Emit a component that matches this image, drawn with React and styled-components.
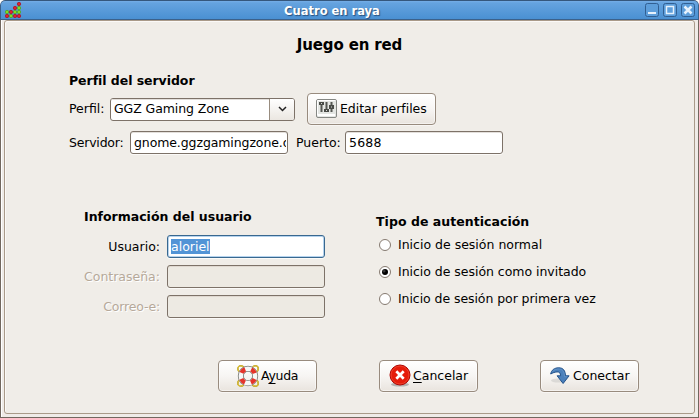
import React from "react";
import styled, { createGlobalStyle, css } from "styled-components";

const Global = createGlobalStyle`
  * { box-sizing: border-box; }
  body { margin: 0; background: #fff; overflow: hidden; }
`;

const Window = styled.div`
  width: 699px;
  height: 418px;
  display: flex;
  flex-direction: column;
  overflow: hidden;
  border-radius: 5px 5px 0 0;
  background: #efebe7;
  color: #000;
  font: 12.5px/16px "DejaVu Sans", sans-serif;
  white-space: nowrap;
`;

const TitleBar = styled.header`
  height: 20px;
  flex: none;
  display: grid;
  grid-template-columns: 64px 1fr 64px;
  align-items: center;
  padding: 0 3px 0 4px;
  border: 1px solid #3b618b;
  border-top-color: #35577c;
  border-radius: 5px 5px 0 0;
  background: linear-gradient(#75aee7 0, #65a3df 2px, #4a90d2 100%);
`;

const WindowTitle = styled.h1`
  margin: 0;
  padding: 1px 36px 0 0;
  text-align: center;
  font-size: 11.5px;
  line-height: 16px;
  color: #fff;
  text-shadow: 1px 1px 1px #28507c;
`;

const WindowButtons = styled.div`
  display: flex;
  justify-content: flex-end;
  gap: 4px;
`;

const Frame = styled.div`
  flex: 1;
  min-height: 0;
  padding: 0 3px 3px;
  border: solid #71675e;
  border-width: 0 1px 1px;
  box-shadow: inset 1px 0 #fff;
`;

const Body = styled.main`
  height: 394px;
  border: 1px solid #a99a89;
  border-radius: 3px;
  box-shadow: inset 1px 1px #fbf9f7;
  background: #f0ede8;
  display: flex;
  flex-direction: column;
`;

const Heading = styled.h2`
  margin: 14px 0 0;
  text-align: center;
  font-size: 15px;
  line-height: 20px;
  letter-spacing: -0.15px;
`;

const SectionTitle = styled.h3`
  margin: 0;
  height: 16px;
  font-size: 12.5px;
  line-height: 16px;
  letter-spacing: ${(p) => p.$spacing || 0}px;
`;

const Text = styled.span`
  letter-spacing: ${(p) => p.$spacing || 0}px;
`;

const Server = styled.section`
  margin-top: 18px;
  padding-left: 64px;
`;

const Row = styled.div`
  display: flex;
  align-items: center;
  height: ${(p) => p.$height}px;
  margin-top: ${(p) => p.$top || 0}px;
`;

const Label = styled.label`
  width: ${(p) => p.$width}px;
  flex: none;
  letter-spacing: ${(p) => p.$spacing || 0}px;
  padding-left: ${(p) => p.$indent || 0}px;
  ${(p) => p.$right && css`text-align: right; padding-right: 7px;`}
  ${(p) => p.$disabled && css`color: #b6a99a; text-shadow: 1px 1px #fff;`}
`;

const Field = styled.div`
  width: 158px;
  height: 23px;
  flex: none;
  overflow: hidden;
  padding: 3px 0 0 3px;
  border: 1px solid #7d7268;
  border-radius: 3px;
  background: #fff;
  box-shadow: inset 0 1px #e3dfdb, 0 1px #fbfaf8;
  ${(p) => p.$focused && css`border-color: #39688f; box-shadow: inset 0 0 0 1px #b5d3ee, 0 1px #fbfaf8;`}
  ${(p) => p.$disabled && css`background: #edeae3; box-shadow: inset 0 1px #dfd8d0, 0 1px #fbfaf8;`}
`;

const Clip = styled.div`
  overflow: hidden;
  width: 152px;
  letter-spacing: ${(p) => p.$spacing || 0}px;
`;

const Selection = styled.span`
  display: inline-block;
  height: 15px;
  line-height: 15px;
  background: #5294d6;
  color: #fff;
`;

const Combo = styled.div`
  display: flex;
  width: 185px;
  height: 23px;
  overflow: hidden;
  border: 1px solid #7d7268;
  border-radius: 3px;
  background: #fff;
`;

const ComboValue = styled.div`
  flex: 1;
  padding: 2px 0 0 3px;
  box-shadow: inset 0 1px #e3dfdb;
  letter-spacing: -0.09px;
`;

const ComboArrow = styled.div`
  width: 25px;
  display: grid;
  place-items: center;
  border-left: 1px solid #988c7f;
  background: linear-gradient(#fff, #ebe7e1);
`;

const Button = styled.button`
  width: ${(p) => p.$width || 99}px;
  height: 32px;
  flex: none;
  display: flex;
  align-items: center;
  gap: ${(p) => p.$gap ?? 2}px;
  margin: 0 0 0 ${(p) => p.$left || 0}px;
  padding: 0 0 1px ${(p) => p.$pad}px;
  border: 1px solid #988b7e;
  border-radius: 4px;
  background: linear-gradient(#fff, #f7f5f3 50%, #e9e4de);
  box-shadow: inset 0 0 0 1px #ffffff80, 0 1px #f8f6f4;
  color: inherit;
  font: inherit;
  svg { flex: none; }
`;

const Mnemonic = styled.span`
  text-decoration: underline;
  text-decoration-thickness: 1px;
  text-underline-offset: ${(p) => p.$offset || 2}px;
  text-decoration-skip-ink: none;
`;

const Columns = styled.div`
  display: grid;
  grid-template-columns: 292px 1fr;
  margin-top: 55px;
  padding-left: 79px;
`;

const RadioGroup = styled.div`
  padding-top: 5px;
`;

const RadioOption = styled.label`
  display: flex;
  align-items: center;
  gap: 7px;
  height: 27px;
  padding-left: 3px;
  margin-top: ${(p) => p.$top || 0}px;
`;

const RadioDot = styled.span`
  width: 12px;
  height: 12px;
  border: 1px solid #857a70;
  border-radius: 50%;
  display: grid;
  place-items: center;
  background: #fff;
  &::after {
    content: "";
    width: 6px;
    height: 6px;
    border-radius: 50%;
    background: ${(p) => (p.$checked ? "radial-gradient(circle at 35% 35%, #555 0, #000 35%)" : "transparent")};
  }
`;

const Actions = styled.footer`
  display: flex;
  gap: 62px;
  margin-top: 42px;
  padding-left: 213px;
`;

const pieces = [
  [14, 2, 1], [10, 6, 1], [14, 6, 0], [2, 10, 0], [6, 10, 1], [10, 10, 0],
  [14, 10, 0], [2, 14, 1], [6, 14, 0], [10, 14, 1], [14, 14, 1],
];

const GameIcon = () => (
  <svg width="18" height="16" viewBox="0 0 18 16">
    {pieces.map(([x, y, red]) => (
      <circle key={`${x}-${y}`} cx={x} cy={y} r="1.7" fill={red ? "#e2202a" : "#82dc20"} stroke={red ? "#a5182c" : "#4fa32a"} strokeWidth=".8" />
    ))}
  </svg>
);

const WindowIcon = ({ children }) => (
  <svg width="14" height="14" viewBox="0 0 14 14">
    <rect x=".5" y=".5" width="13" height="13" rx="2" fill="#5d9edb" stroke="#315f92" />
    {children}
  </svg>
);

const SlidersIcon = () => (
  <svg width="21" height="19" viewBox="0 0 21 19">
    <rect x=".5" y=".5" width="20" height="18" rx="1.5" fill="#e4e6e3" stroke="#858783" />
    <path d="M1.5 16.5V1.5h18" fill="none" stroke="#fff" />
    <path d="M2 16h17" stroke="#fff" strokeWidth="2" />
    <path d="M5.5 5v8M10.5 3v8M15.5 3v10" stroke="#555753" strokeWidth="2" />
    <path d="M3 3h5v3H3zM8 10h5v3H8zM13 6h5v4h-5z" fill="#494b47" />
    <path d="M5 4.5h1M10 11.5h1M15 8h1" stroke="#d8dad6" />
  </svg>
);

const HelpIcon = () => (
  <svg width="22" height="22" viewBox="0 0 22 22">
    {[[3.8, 3.8], [18.2, 3.8], [3.8, 18.2], [18.2, 18.2]].map(([x, y]) => (
      <g key={`${x}-${y}`} fill="none">
        <circle cx={x} cy={y} r="3" stroke="#b39412" strokeWidth="1.5" />
        <circle cx={x} cy={y} r="3" stroke="#edd44b" strokeWidth=".8" />
      </g>
    ))}
    <circle cx="11" cy="11" r="7.2" fill="none" stroke="#777975" strokeWidth="6" />
    <circle cx="11" cy="11" r="7.2" fill="none" stroke="#f7f7f6" strokeWidth="4.4" />
    <circle cx="11" cy="11" r="7.2" fill="none" stroke="#e5342b" strokeWidth="4.4" strokeDasharray="5.2 6.11" strokeDashoffset="-3.055" />
  </svg>
);

const CancelIcon = () => (
  <svg width="22" height="23" viewBox="0 0 22 23">
    <ellipse cx="11" cy="20.5" rx="9" ry="2" fill="#777" opacity=".5" />
    <circle cx="11" cy="11" r="10" fill="#e51c0b" stroke="#ad0804" />
    <circle cx="11" cy="11" r="8.9" fill="none" stroke="#f0452f" strokeWidth=".8" />
    <path d="M7.3 7.3l7.4 7.4M14.7 7.3l-7.4 7.4" stroke="#fff" strokeWidth="2.7" />
  </svg>
);

const ConnectIcon = () => (
  <svg width="20" height="18" viewBox="0 0 20 18">
    <ellipse cx="8" cy="13.5" rx="7" ry="2" fill="#999" opacity=".25" />
    <path d="M.7 7C1.5 3 4.3.8 8.8.8c4.4 0 6.5 2.7 6.7 8h3.6l-6 7.7-6-7.7h3.5C10.5 6 9.4 4.7 7 4.9 4.5 5.1 3 5.8.7 7z" fill="#4b80bb" stroke="#24528a" />
    <path d="M2.4 4.8C4 2.5 7 1.7 9.7 2.1c3 .4 4.6 3 4.8 7.6h2.7" fill="none" stroke="#6795c8" strokeWidth=".8" />
  </svg>
);

const options = [
  ["Inicio de sesión normal", false, 0],
  ["Inicio de sesión como invitado", true, -0.03],
  ["Inicio de sesión por primera vez", false, -0.07],
];

export default function App() {
  return (
    <Window>
      <Global />
      <TitleBar>
        <GameIcon />
        <WindowTitle>Cuatro en raya</WindowTitle>
        <WindowButtons>
          <WindowIcon><path d="M3 10h8" stroke="#e6f1fc" strokeWidth="2" /></WindowIcon>
          <WindowIcon><path d="M3.5 3.5h7v7h-7z" fill="none" stroke="#e6f1fc" strokeWidth="1.5" /></WindowIcon>
          <WindowIcon><path d="M3.5 3.5l7 7M10.5 3.5l-7 7" stroke="#e6f1fc" strokeWidth="2.5" /></WindowIcon>
        </WindowButtons>
      </TitleBar>
      <Frame>
        <Body>
          <Heading>Juego en red</Heading>
          <Server>
            <SectionTitle $spacing={-0.05}>Perfil del servidor</SectionTitle>
            <Row $height={32} $top={4}>
              <Label $width={41}>Perfil:</Label>
              <Combo>
                <ComboValue>GGZ Gaming Zone</ComboValue>
                <ComboArrow>
                  <svg width="9" height="6" viewBox="0 0 9 6"><path d="M1 1l3.5 3.5L8 1" fill="none" stroke="#222" strokeWidth="1.5" /></svg>
                </ComboArrow>
              </Combo>
              <Button $width={129} $left={12} $pad={8} $gap={3}><SlidersIcon /><Text $spacing={-0.04}>Editar perfiles</Text></Button>
            </Row>
            <Row $height={23} $top={6}>
              <Label $width={61} $spacing={-0.2}>Servidor:</Label>
              <Field><Clip $spacing={-0.1}>gnome.ggzgamingzone.org</Clip></Field>
              <Label $width={57} $indent={8}>Puerto:</Label>
              <Field><Clip $spacing={0.2}>5688</Clip></Field>
            </Row>
          </Server>
          <Columns>
            <section>
              <SectionTitle $spacing={0}>Información del usuario</SectionTitle>
              <Row $height={23} $top={10}>
                <Label $width={83} $right>Usuario:</Label>
                <Field $focused><Selection>aloriel</Selection></Field>
              </Row>
              <Row $height={23} $top={7}>
                <Label $width={83} $right $disabled>Contraseña:</Label>
                <Field $disabled />
              </Row>
              <Row $height={23} $top={7}>
                <Label $width={83} $right $disabled $spacing={-0.15}>Correo-e:</Label>
                <Field $disabled />
              </Row>
            </section>
            <RadioGroup>
              <SectionTitle $spacing={0.04}>Tipo de autenticación</SectionTitle>
              {options.map(([label, checked, spacing], i) => (
                <RadioOption key={label} $top={i ? 0 : 1}>
                  <RadioDot $checked={checked} />
                  <Text $spacing={spacing}>{label}</Text>
                </RadioOption>
              ))}
            </RadioGroup>
          </Columns>
          <Actions>
            <Button $pad={18}><HelpIcon /><Text $spacing={-0.3}>A<Mnemonic $offset={3}>y</Mnemonic>uda</Text></Button>
            <Button $pad={9}><CancelIcon /><Text><Mnemonic>C</Mnemonic>ancelar</Text></Button>
            <Button $pad={9} $gap={3}><ConnectIcon /><Text>Conectar</Text></Button>
          </Actions>
        </Body>
      </Frame>
    </Window>
  );
}
